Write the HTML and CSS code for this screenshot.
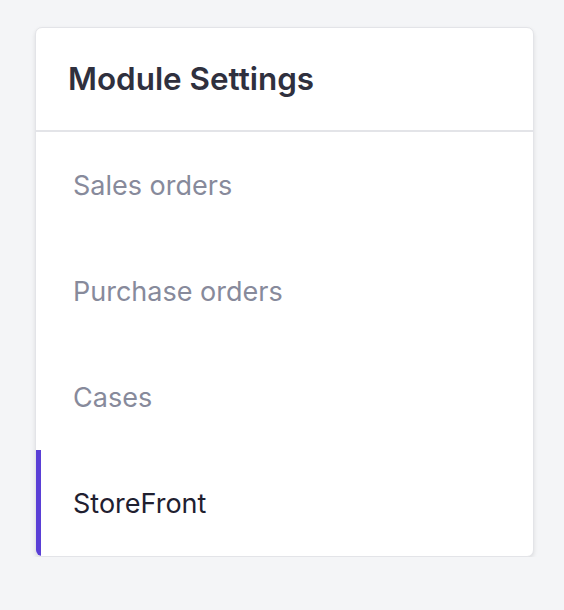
FILE: index.html
```html
<!DOCTYPE html>
<html>
<head>
<meta charset="utf-8">
<link rel="stylesheet" href="styles.css">
</head>
<body>
<div class="card">
  <div class="card-header"><h2 class="title">Module Settings</h2></div>
  <nav class="menu">
    <a class="item">Sales orders</a>
    <a class="item">Purchase orders</a>
    <a class="item">Cases</a>
    <a class="item active">StoreFront</a>
  </nav>
</div>
</body>
</html>
```
FILE: styles.css
```css
html, body { margin: 0; padding: 0; }
body {
  background: #f4f5f7;
  font-family: Inter, "Noto Sans", sans-serif;
  padding: 27px 30px 0 35px;
}
.card {
  width: 499px;
  box-sizing: border-box;
  background: #fff;
  border: 1px solid #e3e4e8;
  border-radius: 7px;
  box-shadow: 0 2px 4px rgba(0,0,0,0.1);
  overflow: hidden;
}
.card-header {
  height: 102px;
  border-bottom: 2px solid #e3e4e8;
  display: flex;
  align-items: center;
  padding-left: 32px;
}
.title {
  margin: 0;
  font-size: 31.4px;
  font-weight: 600;
  color: #2f303e;
  letter-spacing: 0;
}
.menu { display: flex; flex-direction: column; }
.item {
  height: 106px;
  display: flex;
  align-items: center;
  padding-left: 32px;
  font-size: 27px;
  color: #878a9b;
  border-left: 6px solid transparent;
  margin-left: -1px;
}
.item.active {
  color: #1f2030;
  border-left-color: #5a3fd6;
}
```
